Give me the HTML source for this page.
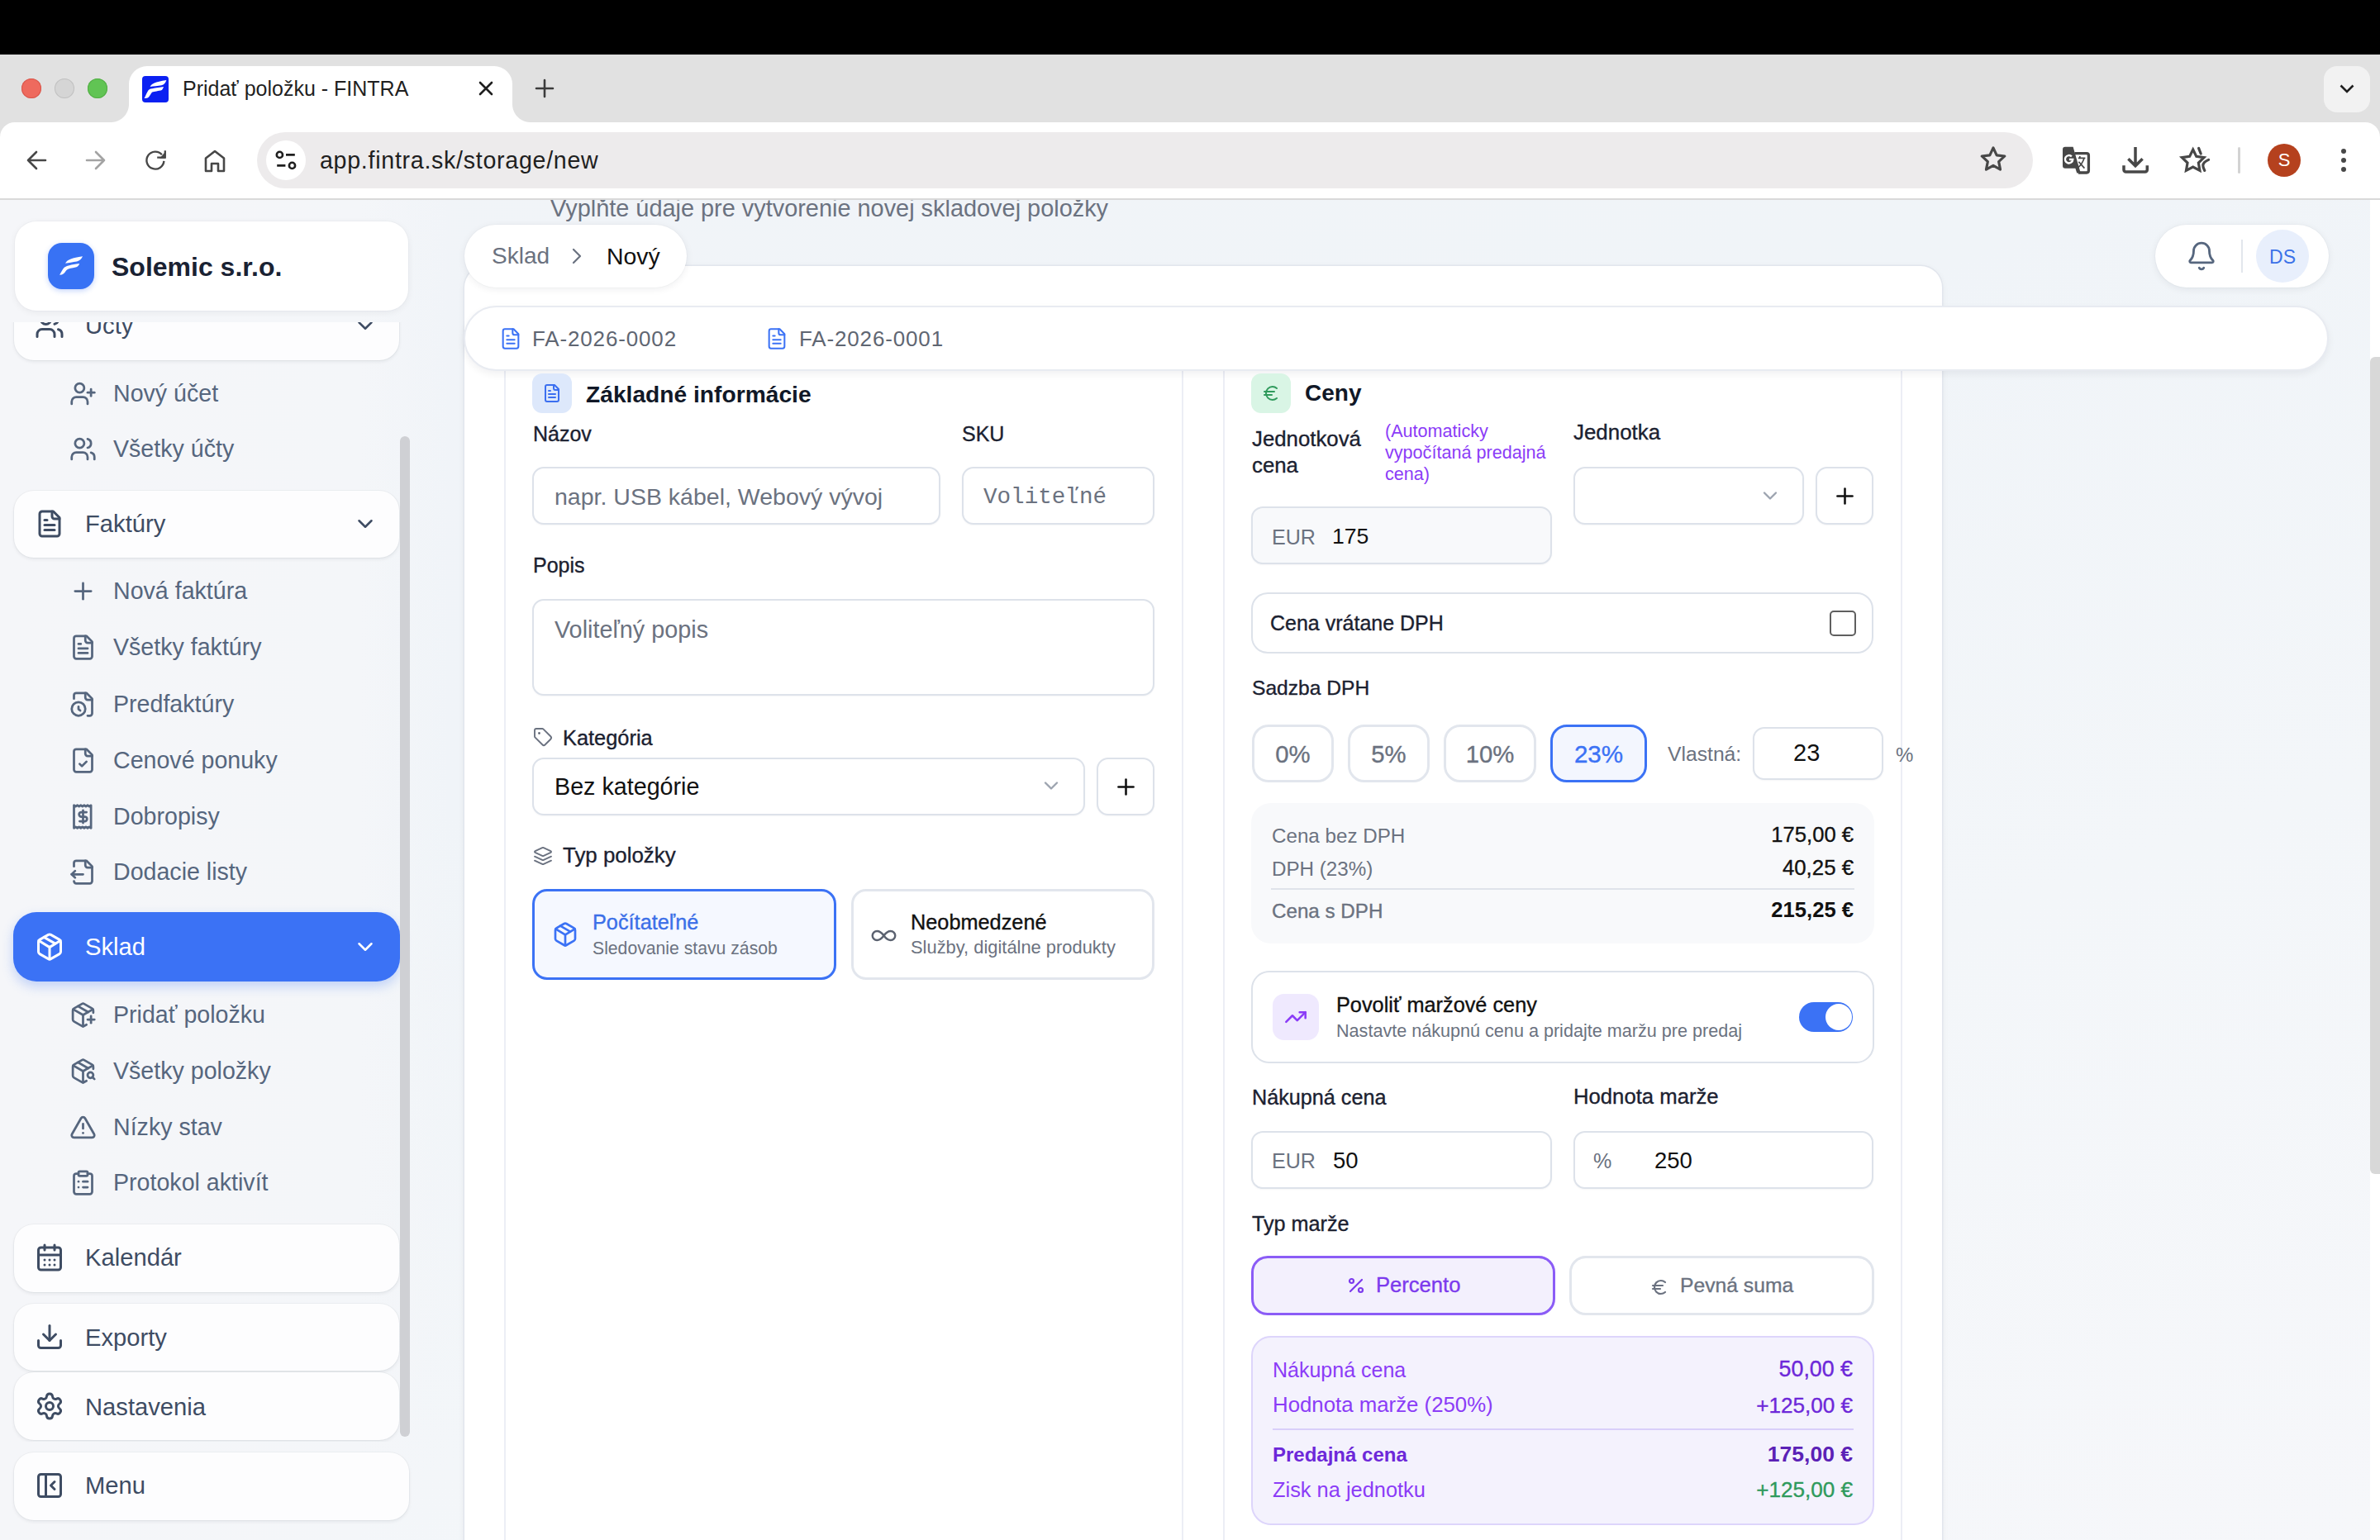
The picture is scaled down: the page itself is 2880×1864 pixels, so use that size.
<!DOCTYPE html>
<html><head><meta charset="utf-8"><style>*{margin:0;padding:0;box-sizing:border-box}
html,body{width:2880px;height:1864px;overflow:hidden;background:#f3f5f8;font-family:"Liberation Sans",sans-serif}
.b{position:absolute}
.t{position:absolute;white-space:nowrap;line-height:1}
svg.b{overflow:visible}
</style></head><body>
<div id="root" style="position:relative;width:2880px;height:1864px;overflow:hidden">
<div class="b" style="left:0;top:242px;width:2880px;height:1622px;background:linear-gradient(160deg,#f1f4f8 0%,#f0f4f8 35%,#f3f6f9 65%,#f6f7fa 100%);"></div>
<div class="b" style="left:0;top:242px;width:545px;height:1622px;background:linear-gradient(90deg,#f5f6f9 0%,#f4f6f9 80%,rgba(244,246,249,0) 100%);"></div>
<div class="b" style="left:0;top:390px;width:520px;height:1355px;overflow:hidden;"><div class="b" style="left:0;top:-390px;width:520px;height:1864px;">
<div class="b " style="left:17px;top:355px;width:466px;height:81px;background:#fdfdfe;border-radius:24px;box-shadow:0 2px 4px rgba(15,23,42,0.07),0 0 0 1px rgba(15,23,42,0.03);"></div>
<svg class="b" style="left:42px;top:375.5px;" width="36" height="36" viewBox="0 0 24 24" fill="none" stroke="#3e4c63" stroke-width="2" stroke-linecap="round" stroke-linejoin="round"><path d="M16 21v-2a4 4 0 0 0-4-4H6a4 4 0 0 0-4 4v2"/><path d="M16 3.13a4 4 0 0 1 0 7.75"/><path d="M22 21v-2a4 4 0 0 0-3-3.87"/><circle cx="9" cy="7" r="4"/></svg>
<div class="t " style="left:103px;top:380.28px;font-size:29.2px;color:#3e4c63;">Účty</div>
<svg class="b" style="left:427px;top:378.5px;" width="30" height="30" viewBox="0 0 24 24" fill="none" stroke="#3e4c63" stroke-width="2" stroke-linecap="round" stroke-linejoin="round"><path d="m6 9 6 6 6-6"/></svg>
<svg class="b" style="left:83.5px;top:459.5px;" width="33" height="33" viewBox="0 0 24 24" fill="none" stroke="#56667e" stroke-width="2" stroke-linecap="round" stroke-linejoin="round"><path d="M16 21v-2a4 4 0 0 0-4-4H6a4 4 0 0 0-4 4v2"/><circle cx="9" cy="7" r="4"/><line x1="19" x2="19" y1="8" y2="14"/><line x1="22" x2="16" y1="11" y2="11"/></svg>
<div class="t " style="left:137px;top:461.79px;font-size:28.6px;color:#56667e;">Nový účet</div>
<svg class="b" style="left:83.5px;top:526.5px;" width="33" height="33" viewBox="0 0 24 24" fill="none" stroke="#56667e" stroke-width="2" stroke-linecap="round" stroke-linejoin="round"><path d="M16 21v-2a4 4 0 0 0-4-4H6a4 4 0 0 0-4 4v2"/><path d="M16 3.13a4 4 0 0 1 0 7.75"/><path d="M22 21v-2a4 4 0 0 0-3-3.87"/><circle cx="9" cy="7" r="4"/></svg>
<div class="t " style="left:137px;top:528.79px;font-size:28.6px;color:#56667e;">Všetky účty</div>
<div class="b " style="left:17px;top:594px;width:466px;height:81px;background:#fdfdfe;border-radius:24px;box-shadow:0 2px 4px rgba(15,23,42,0.07),0 0 0 1px rgba(15,23,42,0.03);"></div>
<svg class="b" style="left:42px;top:615.5px;" width="36" height="36" viewBox="0 0 24 24" fill="none" stroke="#3e4c63" stroke-width="2" stroke-linecap="round" stroke-linejoin="round"><path d="M15 2H6a2 2 0 0 0-2 2v16a2 2 0 0 0 2 2h12a2 2 0 0 0 2-2V7Z"/><path d="M14 2v4a2 2 0 0 0 2 2h4"/><path d="M10 9H8"/><path d="M16 13H8"/><path d="M16 17H8"/></svg>
<div class="t " style="left:103px;top:620.28px;font-size:29.2px;color:#3e4c63;">Faktúry</div>
<svg class="b" style="left:427px;top:618.5px;" width="30" height="30" viewBox="0 0 24 24" fill="none" stroke="#3e4c63" stroke-width="2" stroke-linecap="round" stroke-linejoin="round"><path d="m6 9 6 6 6-6"/></svg>
<svg class="b" style="left:83.5px;top:698.5px;" width="33" height="33" viewBox="0 0 24 24" fill="none" stroke="#56667e" stroke-width="2" stroke-linecap="round" stroke-linejoin="round"><path d="M5 12h14"/><path d="M12 5v14"/></svg>
<div class="t " style="left:137px;top:700.79px;font-size:28.6px;color:#56667e;">Nová faktúra</div>
<svg class="b" style="left:83.5px;top:766.5px;" width="33" height="33" viewBox="0 0 24 24" fill="none" stroke="#56667e" stroke-width="2" stroke-linecap="round" stroke-linejoin="round"><path d="M15 2H6a2 2 0 0 0-2 2v16a2 2 0 0 0 2 2h12a2 2 0 0 0 2-2V7Z"/><path d="M14 2v4a2 2 0 0 0 2 2h4"/><path d="M10 9H8"/><path d="M16 13H8"/><path d="M16 17H8"/></svg>
<div class="t " style="left:137px;top:768.79px;font-size:28.6px;color:#56667e;">Všetky faktúry</div>
<svg class="b" style="left:83.5px;top:835.5px;" width="33" height="33" viewBox="0 0 24 24" fill="none" stroke="#56667e" stroke-width="2" stroke-linecap="round" stroke-linejoin="round"><path d="M16 22h2a2 2 0 0 0 2-2V7l-5-5H6a2 2 0 0 0-2 2v3"/><path d="M14 2v4a2 2 0 0 0 2 2h4"/><circle cx="8" cy="16" r="6"/><path d="M9.5 17.5 8 16.25V14"/></svg>
<div class="t " style="left:137px;top:837.79px;font-size:28.6px;color:#56667e;">Predfaktúry</div>
<svg class="b" style="left:83.5px;top:903.5px;" width="33" height="33" viewBox="0 0 24 24" fill="none" stroke="#56667e" stroke-width="2" stroke-linecap="round" stroke-linejoin="round"><path d="M15 2H6a2 2 0 0 0-2 2v16a2 2 0 0 0 2 2h12a2 2 0 0 0 2-2V7Z"/><path d="M14 2v4a2 2 0 0 0 2 2h4"/><path d="m9 15 2 2 4-4"/></svg>
<div class="t " style="left:137px;top:905.79px;font-size:28.6px;color:#56667e;">Cenové ponuky</div>
<svg class="b" style="left:83.5px;top:971.5px;" width="33" height="33" viewBox="0 0 24 24" fill="none" stroke="#56667e" stroke-width="2" stroke-linecap="round" stroke-linejoin="round"><path d="M4 3v19l1.5-1 1.5 1 1.5-1 1.5 1 1.5-1 1.5 1 1.5-1 1.5 1 1.5-1 1.5 1V2l-1.5 1-1.5-1-1.5 1-1.5-1-1.5 1-1.5-1-1.5 1-1.5-1-1.5 1-1.5-1Z"/><path d="M15 8h-4.5a2 2 0 1 0 0 4h3a2 2 0 1 1 0 4H9"/><path d="M12 17.5v-11"/></svg>
<div class="t " style="left:137px;top:973.79px;font-size:28.6px;color:#56667e;">Dobropisy</div>
<svg class="b" style="left:83.5px;top:1038.5px;" width="33" height="33" viewBox="0 0 24 24" fill="none" stroke="#56667e" stroke-width="2" stroke-linecap="round" stroke-linejoin="round"><path d="M14 2v4a2 2 0 0 0 2 2h4"/><path d="M4 7V4a2 2 0 0 1 2-2h9l5 5v13a2 2 0 0 1-2 2H6a2 2 0 0 1-2-2"/><path d="m5 11-3 3"/><path d="m5 17-3-3h10"/></svg>
<div class="t " style="left:137px;top:1040.79px;font-size:28.6px;color:#56667e;">Dodacie listy</div>
<div class="b " style="left:16px;top:1104px;width:468px;height:84px;background:#3b72f5;border-radius:28px;box-shadow:0 6px 14px rgba(59,114,245,0.28);"></div>
<svg class="b" style="left:42px;top:1127.5px;" width="36" height="36" viewBox="0 0 24 24" fill="none" stroke="#fff" stroke-width="2" stroke-linecap="round" stroke-linejoin="round"><path d="M11 21.73a2 2 0 0 0 2 0l7-4A2 2 0 0 0 21 16V8a2 2 0 0 0-1-1.73l-7-4a2 2 0 0 0-2 0l-7 4A2 2 0 0 0 3 8v8a2 2 0 0 0 1 1.73z"/><path d="M12 22V12"/><path d="m3.3 7 7.703 4.734a2 2 0 0 0 1.994 0L20.7 7"/><path d="m7.5 4.27 9 5.15"/></svg>
<div class="t " style="left:103px;top:1132.28px;font-size:29.2px;color:#fff;">Sklad</div>
<svg class="b" style="left:427px;top:1130.5px;" width="30" height="30" viewBox="0 0 24 24" fill="none" stroke="#fff" stroke-width="2" stroke-linecap="round" stroke-linejoin="round"><path d="m6 9 6 6 6-6"/></svg>
<svg class="b" style="left:83.5px;top:1211.5px;" width="33" height="33" viewBox="0 0 24 24" fill="none" stroke="#56667e" stroke-width="2" stroke-linecap="round" stroke-linejoin="round"><path d="M16 16h6"/><path d="M19 13v6"/><path d="M21 10V8a2 2 0 0 0-1-1.73l-7-4a2 2 0 0 0-2 0l-7 4A2 2 0 0 0 3 8v8a2 2 0 0 0 1 1.73l7 4a2 2 0 0 0 2 0l2-1.14"/><path d="m7.5 4.27 9 5.15"/><polyline points="3.29 7 12 12 20.71 7"/><line x1="12" x2="12" y1="22" y2="12"/></svg>
<div class="t " style="left:137px;top:1213.79px;font-size:28.6px;color:#56667e;">Pridať položku</div>
<svg class="b" style="left:83.5px;top:1279.5px;" width="33" height="33" viewBox="0 0 24 24" fill="none" stroke="#56667e" stroke-width="2" stroke-linecap="round" stroke-linejoin="round"><path d="M21 10V8a2 2 0 0 0-1-1.73l-7-4a2 2 0 0 0-2 0l-7 4A2 2 0 0 0 3 8v8a2 2 0 0 0 1 1.73l7 4a2 2 0 0 0 2 0l2-1.14"/><path d="m7.5 4.27 9 5.15"/><polyline points="3.29 7 12 12 20.71 7"/><line x1="12" x2="12" y1="22" y2="12"/><circle cx="18.5" cy="15.5" r="2.5"/><path d="M20.27 17.27 22 19"/></svg>
<div class="t " style="left:137px;top:1281.79px;font-size:28.6px;color:#56667e;">Všetky položky</div>
<svg class="b" style="left:83.5px;top:1347.5px;" width="33" height="33" viewBox="0 0 24 24" fill="none" stroke="#56667e" stroke-width="2" stroke-linecap="round" stroke-linejoin="round"><path d="m21.73 18-8-14a2 2 0 0 0-3.48 0l-8 14A2 2 0 0 0 4 21h16a2 2 0 0 0 1.73-3"/><path d="M12 9v4"/><path d="M12 17h.01"/></svg>
<div class="t " style="left:137px;top:1349.79px;font-size:28.6px;color:#56667e;">Nízky stav</div>
<svg class="b" style="left:83.5px;top:1414.5px;" width="33" height="33" viewBox="0 0 24 24" fill="none" stroke="#56667e" stroke-width="2" stroke-linecap="round" stroke-linejoin="round"><rect width="8" height="4" x="8" y="2" rx="1" ry="1"/><path d="M16 4h2a2 2 0 0 1 2 2v14a2 2 0 0 1-2 2H6a2 2 0 0 1-2-2V6a2 2 0 0 1 2-2h2"/><path d="M12 11h4"/><path d="M12 16h4"/><path d="M8 11h.01"/><path d="M8 16h.01"/></svg>
<div class="t " style="left:137px;top:1416.79px;font-size:28.6px;color:#56667e;">Protokol aktivít</div>
<div class="b " style="left:17px;top:1482px;width:466px;height:82px;background:#fdfdfe;border-radius:24px;box-shadow:0 2px 4px rgba(15,23,42,0.07),0 0 0 1px rgba(15,23,42,0.03);"></div>
<svg class="b" style="left:42px;top:1503.5px;" width="36" height="36" viewBox="0 0 24 24" fill="none" stroke="#3e4c63" stroke-width="2" stroke-linecap="round" stroke-linejoin="round"><path d="M8 2v4"/><path d="M16 2v4"/><rect width="18" height="18" x="3" y="4" rx="2"/><path d="M3 10h18"/><path d="M8 14h.01"/><path d="M12 14h.01"/><path d="M16 14h.01"/><path d="M8 18h.01"/><path d="M12 18h.01"/><path d="M16 18h.01"/></svg>
<div class="t " style="left:103px;top:1508.28px;font-size:29.2px;color:#3e4c63;">Kalendár</div>
<div class="b " style="left:17px;top:1578px;width:466px;height:81px;background:#fdfdfe;border-radius:24px;box-shadow:0 2px 4px rgba(15,23,42,0.07),0 0 0 1px rgba(15,23,42,0.03);"></div>
<svg class="b" style="left:42px;top:1600.0px;" width="36" height="36" viewBox="0 0 24 24" fill="none" stroke="#3e4c63" stroke-width="2" stroke-linecap="round" stroke-linejoin="round"><path d="M21 15v4a2 2 0 0 1-2 2H5a2 2 0 0 1-2-2v-4"/><polyline points="7 10 12 15 17 10"/><line x1="12" x2="12" y1="15" y2="3"/></svg>
<div class="t " style="left:103px;top:1604.78px;font-size:29.2px;color:#3e4c63;">Exporty</div>
<div class="b " style="left:17px;top:1661px;width:466px;height:82px;background:#fdfdfe;border-radius:24px;box-shadow:0 2px 4px rgba(15,23,42,0.07),0 0 0 1px rgba(15,23,42,0.03);"></div>
<svg class="b" style="left:42px;top:1684.0px;" width="36" height="36" viewBox="0 0 24 24" fill="none" stroke="#3e4c63" stroke-width="2" stroke-linecap="round" stroke-linejoin="round"><path d="M9.671 4.136a2.34 2.34 0 0 1 4.659 0 2.34 2.34 0 0 0 3.319 1.915 2.34 2.34 0 0 1 2.33 4.033 2.34 2.34 0 0 0 0 3.831 2.34 2.34 0 0 1-2.33 4.033 2.34 2.34 0 0 0-3.319 1.915 2.34 2.34 0 0 1-4.659 0 2.34 2.34 0 0 0-3.32-1.915 2.34 2.34 0 0 1-2.33-4.033 2.34 2.34 0 0 0 0-3.831A2.34 2.34 0 0 1 6.35 6.051a2.34 2.34 0 0 0 3.319-1.915"/><circle cx="12" cy="12" r="3"/></svg>
<div class="t " style="left:103px;top:1688.78px;font-size:29.2px;color:#3e4c63;">Nastavenia</div>
</div></div>
<div class="b " style="left:484px;top:528px;width:12px;height:1211px;background:#cfd0d4;border-radius:6px;"></div>
<div class="b " style="left:17px;top:1758px;width:478px;height:82px;background:#fdfdfe;border-radius:24px;box-shadow:0 2px 4px rgba(15,23,42,0.07),0 0 0 1px rgba(15,23,42,0.03);"></div>
<svg class="b" style="left:42px;top:1779.5px;" width="36" height="36" viewBox="0 0 24 24" fill="none" stroke="#3e4c63" stroke-width="2" stroke-linecap="round" stroke-linejoin="round"><rect width="18" height="18" x="3" y="3" rx="2"/><path d="M9 3v18"/><path d="m16 15-3-3 3-3"/></svg>
<div class="t " style="left:103px;top:1784.28px;font-size:29.2px;color:#3e4c63;">Menu</div>
<div class="b " style="left:18px;top:268px;width:476px;height:108px;background:#fff;border-radius:26px;box-shadow:0 2px 8px rgba(15,23,42,0.06),0 0 0 1px rgba(15,23,42,0.02);"></div>
<div class="b " style="left:58px;top:294px;width:56px;height:56px;background:#3872f4;border-radius:17px;box-shadow:0 2px 6px rgba(59,113,243,0.3);"></div>
<svg class="b" style="left:58px;top:294px" width="56" height="56" viewBox="0 0 56 56"><path d="M21 24.7 C24 20 29 18.2 42 16.3 C40.5 19.5 38.5 21.6 35 22.4 C30 23.3 25 23.8 21 24.7 Z" fill="#fff"/><path d="M14.1 38.8 C16.5 35 17.5 32 19.5 30 C22 27.5 28 26.3 38.2 24.9 C37.2 27.3 36 28.8 33.5 29.5 C29 30.5 25 31 23 32.5 C21 34 20.5 37.5 16.5 38.5 Z" fill="#fff"/></svg>
<div class="t " style="left:135px;top:306.91px;font-size:32px;color:#1a2233;font-weight:700;">Solemic s.r.o.</div>
<div class="t " style="left:666px;top:237.54px;font-size:28.9px;color:#6b7280;">Vyplňte údaje pre vytvorenie novej skladovej položky</div>
<div class="b " style="left:562px;top:322px;width:1788px;height:1578px;background:#fff;border-radius:26px;box-shadow:0 0 0 1.5px #e2e6ed,0 2px 10px rgba(15,23,42,0.06);"></div>
<div class="b " style="left:610px;top:400px;width:822px;height:1500px;border:2px solid #eceef5;border-radius:24px;box-sizing:border-box;"></div>
<div class="b " style="left:1480px;top:400px;width:822px;height:1500px;border:2px solid #eceef5;border-radius:24px;box-sizing:border-box;"></div>
<div class="b " style="left:562px;top:272px;width:269px;height:76px;background:#fff;border-radius:38px;box-shadow:0 2px 10px rgba(15,23,42,0.07),0 0 0 1px rgba(15,23,42,0.02);"></div>
<div class="t " style="left:595px;top:296.30px;font-size:28px;color:#6b7280;">Sklad</div>
<svg class="b" style="left:682px;top:294px;" width="32" height="32" viewBox="0 0 24 24" fill="none" stroke="#6b7280" stroke-width="1.7" stroke-linecap="round" stroke-linejoin="round"><path d="m9 18 6-6-6-6"/></svg>
<div class="t " style="left:734px;top:295.96px;font-size:28.4px;color:#111;">Nový</div>
<div class="b " style="left:2608px;top:272px;width:210px;height:76px;background:#fff;border-radius:38px;box-shadow:0 2px 10px rgba(15,23,42,0.07),0 0 0 1px rgba(15,23,42,0.02);"></div>
<svg class="b" style="left:2645px;top:291px;" width="38" height="38" viewBox="0 0 24 24" fill="none" stroke="#56667e" stroke-width="1.8" stroke-linecap="round" stroke-linejoin="round"><path d="M10.268 21a2 2 0 0 0 3.464 0"/><path d="M3.262 15.326A1 1 0 0 0 4 17h16a1 1 0 0 0 .74-1.673C19.41 13.956 18 12.499 18 8A6 6 0 0 0 6 8c0 4.499-1.411 5.956-2.738 7.326"/></svg>
<div class="b " style="left:2712px;top:290px;width:2px;height:40px;background:#e2e6ec;"></div>
<div class="b " style="left:2730px;top:278px;width:64px;height:64px;background:#e8effc;border-radius:50%;"></div>
<div class="t " style="left:2730.0px;width:64px;text-align:center;top:299.53px;font-size:23px;color:#3b72e8;">DS</div>
<div class="b " style="left:561px;top:370px;width:2257px;height:79px;background:#fff;border:2px solid #e8ebf1;border-radius:40px;box-shadow:0 4px 10px rgba(15,23,42,0.06);"></div>
<svg class="b" style="left:604px;top:396px;" width="28" height="28" viewBox="0 0 24 24" fill="none" stroke="#3b72f5" stroke-width="1.75" stroke-linecap="round" stroke-linejoin="round"><path d="M15 2H6a2 2 0 0 0-2 2v16a2 2 0 0 0 2 2h12a2 2 0 0 0 2-2V7Z"/><path d="M14 2v4a2 2 0 0 0 2 2h4"/><path d="M10 9H8"/><path d="M16 13H8"/><path d="M16 17H8"/></svg>
<div class="t " style="left:644px;top:396.99px;font-size:26px;color:#5f6672;letter-spacing:0.85px;">FA-2026-0002</div>
<svg class="b" style="left:926px;top:396px;" width="28" height="28" viewBox="0 0 24 24" fill="none" stroke="#3b72f5" stroke-width="1.75" stroke-linecap="round" stroke-linejoin="round"><path d="M15 2H6a2 2 0 0 0-2 2v16a2 2 0 0 0 2 2h12a2 2 0 0 0 2-2V7Z"/><path d="M14 2v4a2 2 0 0 0 2 2h4"/><path d="M10 9H8"/><path d="M16 13H8"/><path d="M16 17H8"/></svg>
<div class="t " style="left:967px;top:396.99px;font-size:26px;color:#5f6672;letter-spacing:0.85px;">FA-2026-0001</div>
<div class="b " style="left:2868px;top:242px;width:12px;height:1622px;background:#fff;"></div>
<div class="b " style="left:2868px;top:432px;width:12px;height:989px;background:#d8d8d8;border-radius:6px 0 0 6px;"></div>
<div class="b " style="left:644px;top:452px;width:48px;height:48px;background:#dde8fb;border-radius:12px;"></div>
<svg class="b" style="left:656px;top:464px;" width="24" height="24" viewBox="0 0 24 24" fill="none" stroke="#3b6ff0" stroke-width="2" stroke-linecap="round" stroke-linejoin="round"><path d="M15 2H6a2 2 0 0 0-2 2v16a2 2 0 0 0 2 2h12a2 2 0 0 0 2-2V7Z"/><path d="M14 2v4a2 2 0 0 0 2 2h4"/><path d="M10 9H8"/><path d="M16 13H8"/><path d="M16 17H8"/></svg>
<div class="t " style="left:709px;top:463.13px;font-size:28.2px;color:#111827;font-weight:700;">Základné informácie</div>
<div class="t " style="left:645px;top:512.84px;font-size:25px;color:#1b2130;-webkit-text-stroke:0.35px currentColor;">Názov</div>
<div class="t " style="left:1164px;top:512.84px;font-size:25px;color:#1b2130;-webkit-text-stroke:0.35px currentColor;">SKU</div>
<div class="b " style="left:644px;top:565px;width:494px;height:70px;background:#fff;border:2px solid #dde2ea;border-radius:14px;box-sizing:border-box;box-shadow:0 1px 2px rgba(15,23,42,0.04);"></div>
<div class="t " style="left:671px;top:586.87px;font-size:28.5px;color:#6b7280;">napr. USB kábel, Webový vývoj</div>
<div class="b " style="left:1164px;top:565px;width:233px;height:70px;background:#fff;border:2px solid #dde2ea;border-radius:14px;box-sizing:border-box;box-shadow:0 1px 2px rgba(15,23,42,0.04);"></div>
<div class="t " style="left:1190px;top:587.64px;font-size:27.6px;color:#6b7280;font-family:'Liberation Mono',monospace;">Voliteľné</div>
<div class="t " style="left:645px;top:671.84px;font-size:25px;color:#1b2130;-webkit-text-stroke:0.35px currentColor;">Popis</div>
<div class="b " style="left:644px;top:725px;width:753px;height:117px;background:#fff;border:2px solid #dde2ea;border-radius:14px;box-sizing:border-box;box-shadow:0 1px 2px rgba(15,23,42,0.04);"></div>
<div class="t " style="left:671px;top:747.62px;font-size:28.8px;color:#6b7280;">Voliteľný popis</div>
<svg class="b" style="left:644.5px;top:880px;" width="24" height="24" viewBox="0 0 24 24" fill="none" stroke="#6b7280" stroke-width="1.9" stroke-linecap="round" stroke-linejoin="round"><path d="M12.586 2.586A2 2 0 0 0 11.172 2H4a2 2 0 0 0-2 2v7.172a2 2 0 0 0 .586 1.414l8.704 8.704a2.426 2.426 0 0 0 3.42 0l6.58-6.58a2.426 2.426 0 0 0 0-3.42z"/><circle cx="7.5" cy="7.5" r=".5" fill="currentColor"/></svg>
<div class="t " style="left:681px;top:880.50px;font-size:25.4px;color:#1b2130;-webkit-text-stroke:0.35px currentColor;">Kategória</div>
<div class="b " style="left:644px;top:917px;width:669px;height:70px;background:#fff;border:2px solid #dde2ea;border-radius:14px;box-sizing:border-box;box-shadow:0 1px 2px rgba(15,23,42,0.04);"></div>
<div class="t " style="left:671px;top:937.71px;font-size:28.7px;color:#111;">Bez kategórie</div>
<svg class="b" style="left:1258px;top:937px;" width="28" height="28" viewBox="0 0 24 24" fill="none" stroke="#9ca3af" stroke-width="2" stroke-linecap="round" stroke-linejoin="round"><path d="m6 9 6 6 6-6"/></svg>
<div class="b " style="left:1327px;top:917px;width:70px;height:70px;background:#fff;border:2px solid #dde2ea;border-radius:14px;box-sizing:border-box;box-shadow:0 1px 2px rgba(15,23,42,0.04);"></div>
<svg class="b" style="left:1346.5px;top:936.5px;" width="31" height="31" viewBox="0 0 24 24" fill="none" stroke="#111" stroke-width="2" stroke-linecap="round" stroke-linejoin="round"><path d="M5 12h14"/><path d="M12 5v14"/></svg>
<svg class="b" style="left:644.5px;top:1024px;" width="24" height="24" viewBox="0 0 24 24" fill="none" stroke="#6b7280" stroke-width="1.9" stroke-linecap="round" stroke-linejoin="round"><path d="M12.83 2.18a2 2 0 0 0-1.66 0L2.6 6.08a1 1 0 0 0 0 1.83l8.58 3.91a2 2 0 0 0 1.66 0l8.58-3.9a1 1 0 0 0 0-1.83Z"/><path d="m22 17.65-9.17 4.16a2 2 0 0 1-1.66 0L2 17.65"/><path d="m22 12.65-9.17 4.16a2 2 0 0 1-1.66 0L2 12.65"/></svg>
<div class="t " style="left:681px;top:1023.08px;font-size:25.9px;color:#1b2130;-webkit-text-stroke:0.35px currentColor;">Typ položky</div>
<div class="b " style="left:644px;top:1076px;width:368px;height:110px;background:#f5f8ff;border:3px solid #3b72f5;border-radius:18px;box-sizing:border-box;"></div>
<svg class="b" style="left:668px;top:1115px;" width="32" height="32" viewBox="0 0 24 24" fill="none" stroke="#3b72f5" stroke-width="2" stroke-linecap="round" stroke-linejoin="round"><path d="M11 21.73a2 2 0 0 0 2 0l7-4A2 2 0 0 0 21 16V8a2 2 0 0 0-1-1.73l-7-4a2 2 0 0 0-2 0l-7 4A2 2 0 0 0 3 8v8a2 2 0 0 0 1 1.73z"/><path d="M12 22V12"/><path d="m3.3 7 7.703 4.734a2 2 0 0 0 1.994 0L20.7 7"/><path d="m7.5 4.27 9 5.15"/></svg>
<div class="t " style="left:717px;top:1103.58px;font-size:25.3px;color:#3b6fe8;-webkit-text-stroke:0.35px currentColor;">Počítateľné</div>
<div class="t " style="left:717px;top:1137.05px;font-size:21.2px;color:#6b7280;">Sledovanie stavu zásob</div>
<div class="b " style="left:1030px;top:1076px;width:367px;height:110px;background:#fff;border:3px solid #e2e6ed;border-radius:18px;box-sizing:border-box;"></div>
<svg class="b" style="left:1052.5px;top:1115.5px;" width="33" height="33" viewBox="0 0 24 24" fill="none" stroke="#5b6270" stroke-width="1.8" stroke-linecap="round" stroke-linejoin="round"><path d="M12 12c-2-2.67-4-4-6-4a4 4 0 1 0 0 8c2 0 4-1.33 6-4Zm0 0c2 2.67 4 4 6 4a4 4 0 0 0 0-8c-2 0-4 1.33-6 4Z"/></svg>
<div class="t " style="left:1102px;top:1103.58px;font-size:25.3px;color:#111;-webkit-text-stroke:0.35px currentColor;">Neobmedzené</div>
<div class="t " style="left:1102px;top:1136.46px;font-size:21.9px;color:#6b7280;">Služby, digitálne produkty</div>
<div class="b " style="left:1514px;top:452px;width:48px;height:48px;background:#d9f5e5;border-radius:12px;"></div>
<svg class="b" style="left:1526px;top:464px;" width="24" height="24" viewBox="0 0 24 24" fill="none" stroke="#2f9a5c" stroke-width="2" stroke-linecap="round" stroke-linejoin="round"><path d="M4 10h12"/><path d="M4 14h9"/><path d="M19 6a7.7 7.7 0 0 0-5.2-2A7.9 7.9 0 0 0 6 12c0 4.4 3.5 8 7.8 8 2 0 3.8-.8 5.2-2"/></svg>
<div class="t " style="left:1579px;top:462.30px;font-size:28px;color:#111827;font-weight:700;">Ceny</div>
<div class="t " style="left:1515px;top:519.16px;font-size:25.8px;color:#1b2130;-webkit-text-stroke:0.35px currentColor;">Jednotková</div>
<div class="t " style="left:1515px;top:551.16px;font-size:25.8px;color:#1b2130;-webkit-text-stroke:0.35px currentColor;">cena</div>
<div class="t " style="left:1676px;top:510.72px;font-size:21.6px;color:#8b3cf7;">(Automaticky</div>
<div class="t " style="left:1676px;top:536.72px;font-size:21.6px;color:#8b3cf7;">vypočítaná predajná</div>
<div class="t " style="left:1676px;top:562.72px;font-size:21.6px;color:#8b3cf7;">cena)</div>
<div class="t " style="left:1904px;top:511.08px;font-size:25.9px;color:#1b2130;-webkit-text-stroke:0.35px currentColor;">Jednotka</div>
<div class="b " style="left:1514px;top:613px;width:364px;height:70px;background:#f8f9fb;border:2px solid #dde2ea;border-radius:14px;box-sizing:border-box;box-shadow:0 1px 2px rgba(15,23,42,0.04);"></div>
<div class="t " style="left:1539px;top:637.75px;font-size:25.1px;color:#6b7280;">EUR</div>
<div class="t " style="left:1612px;top:636.48px;font-size:26.6px;color:#111;">175</div>
<div class="b " style="left:1904px;top:565px;width:279px;height:70px;background:#fff;border:2px solid #dde2ea;border-radius:14px;box-sizing:border-box;box-shadow:0 1px 2px rgba(15,23,42,0.04);"></div>
<svg class="b" style="left:2128px;top:586px;" width="28" height="28" viewBox="0 0 24 24" fill="none" stroke="#9ca3af" stroke-width="2" stroke-linecap="round" stroke-linejoin="round"><path d="m6 9 6 6 6-6"/></svg>
<div class="b " style="left:2197px;top:565px;width:70px;height:70px;background:#fff;border:2px solid #dde2ea;border-radius:14px;box-sizing:border-box;box-shadow:0 1px 2px rgba(15,23,42,0.04);"></div>
<svg class="b" style="left:2216.5px;top:584.5px;" width="31" height="31" viewBox="0 0 24 24" fill="none" stroke="#111" stroke-width="2" stroke-linecap="round" stroke-linejoin="round"><path d="M5 12h14"/><path d="M12 5v14"/></svg>
<div class="b " style="left:1514px;top:717px;width:753px;height:74px;background:#fff;border:2px solid #dde2ea;border-radius:20px;box-sizing:border-box;"></div>
<div class="t " style="left:1537px;top:741.84px;font-size:25px;color:#1b2130;-webkit-text-stroke:0.35px currentColor;">Cena vrátane DPH</div>
<div class="b " style="left:2214px;top:739px;width:32px;height:31px;border:2px solid #5f5f5f;border-radius:5px;box-sizing:border-box;background:#fff;"></div>
<div class="t " style="left:1515px;top:821.18px;font-size:24.6px;color:#1b2130;-webkit-text-stroke:0.35px currentColor;">Sadzba DPH</div>
<div class="b " style="left:1515px;top:877px;width:99px;height:70px;background:#fff;border:3px solid #e2e6ed;border-radius:20px;box-sizing:border-box;"></div>
<div class="t " style="left:1515.0px;width:99px;text-align:center;top:898.20px;font-size:29.3px;color:#6b7280;-webkit-text-stroke:0.35px currentColor;">0%</div>
<div class="b " style="left:1631px;top:877px;width:99px;height:70px;background:#fff;border:3px solid #e2e6ed;border-radius:20px;box-sizing:border-box;"></div>
<div class="t " style="left:1631.0px;width:99px;text-align:center;top:898.20px;font-size:29.3px;color:#6b7280;-webkit-text-stroke:0.35px currentColor;">5%</div>
<div class="b " style="left:1747px;top:877px;width:112px;height:70px;background:#fff;border:3px solid #e2e6ed;border-radius:20px;box-sizing:border-box;"></div>
<div class="t " style="left:1747.0px;width:112px;text-align:center;top:898.20px;font-size:29.3px;color:#6b7280;-webkit-text-stroke:0.35px currentColor;">10%</div>
<div class="b " style="left:1876px;top:877px;width:117px;height:70px;background:#f3f6fe;border:3px solid #3b72f5;border-radius:20px;box-sizing:border-box;"></div>
<div class="t " style="left:1876.0px;width:117px;text-align:center;top:897.94px;font-size:29.6px;color:#3b72f5;-webkit-text-stroke:0.35px currentColor;">23%</div>
<div class="t " style="left:2018px;top:901.09px;font-size:24.7px;color:#6b7280;">Vlastná:</div>
<div class="b " style="left:2121px;top:880px;width:158px;height:64px;background:#fff;border:2px solid #dde2ea;border-radius:14px;box-sizing:border-box;box-shadow:0 1px 2px rgba(15,23,42,0.04);"></div>
<div class="t " style="left:2170px;top:897.45px;font-size:29px;color:#111;">23</div>
<div class="t " style="left:2294px;top:901.68px;font-size:24px;color:#6b7280;">%</div>
<div class="b " style="left:1514px;top:972px;width:754px;height:170px;background:#f8f9fb;border-radius:24px;"></div>
<div class="t " style="left:1539px;top:999.51px;font-size:24.2px;color:#6b7280;">Cena bez DPH</div>
<div class="t " style="right:637px;top:998.33px;font-size:25.6px;color:#111;-webkit-text-stroke:0.35px currentColor;">175,00 €</div>
<div class="t " style="left:1539px;top:1039.51px;font-size:24.2px;color:#6b7280;">DPH (23%)</div>
<div class="t " style="right:637px;top:1038.16px;font-size:25.8px;color:#111;-webkit-text-stroke:0.35px currentColor;">40,25 €</div>
<div class="b " style="left:1538px;top:1075px;width:706px;height:2px;background:#dfe3ea;"></div>
<div class="t " style="left:1539px;top:1090.51px;font-size:24.2px;color:#6b7280;-webkit-text-stroke:0.35px currentColor;">Cena s DPH</div>
<div class="t " style="right:637px;top:1089.33px;font-size:25.6px;color:#111;font-weight:700;">215,25 €</div>
<div class="b " style="left:1514px;top:1175px;width:754px;height:112px;background:#fff;border:2px solid #dde2ea;border-radius:22px;box-sizing:border-box;"></div>
<div class="b " style="left:1540px;top:1203px;width:56px;height:56px;background:#efe9fe;border-radius:14px;"></div>
<svg class="b" style="left:1554px;top:1217px;" width="28" height="28" viewBox="0 0 24 24" fill="none" stroke="#8b3cf7" stroke-width="2.2" stroke-linecap="round" stroke-linejoin="round"><polyline points="22 7 13.5 15.5 8.5 10.5 2 17"/><polyline points="16 7 22 7 22 13"/></svg>
<div class="t " style="left:1617px;top:1203.58px;font-size:25.3px;color:#111;-webkit-text-stroke:0.35px currentColor;">Povoliť maržové ceny</div>
<div class="t " style="left:1617px;top:1236.72px;font-size:21.6px;color:#6b7280;">Nastavte nákupnú cenu a pridajte maržu pre predaj</div>
<div class="b " style="left:2177px;top:1213px;width:65px;height:36px;background:#3b72f5;border-radius:18px;"></div>
<div class="b " style="left:2209px;top:1215px;width:32px;height:32px;background:#fff;border-radius:50%;"></div>
<div class="t " style="left:1515px;top:1315.67px;font-size:25.2px;color:#1b2130;-webkit-text-stroke:0.35px currentColor;">Nákupná cena</div>
<div class="t " style="left:1904px;top:1315.24px;font-size:25.7px;color:#1b2130;-webkit-text-stroke:0.35px currentColor;">Hodnota marže</div>
<div class="b " style="left:1514px;top:1369px;width:364px;height:70px;background:#fff;border:2px solid #dde2ea;border-radius:14px;box-sizing:border-box;box-shadow:0 1px 2px rgba(15,23,42,0.04);"></div>
<div class="t " style="left:1539px;top:1392.75px;font-size:25.1px;color:#6b7280;">EUR</div>
<div class="t " style="left:1613px;top:1390.72px;font-size:27.5px;color:#111;">50</div>
<div class="b " style="left:1904px;top:1369px;width:363px;height:70px;background:#fff;border:2px solid #dde2ea;border-radius:14px;box-sizing:border-box;box-shadow:0 1px 2px rgba(15,23,42,0.04);"></div>
<div class="t " style="left:1928px;top:1392.75px;font-size:25.1px;color:#6b7280;">%</div>
<div class="t " style="left:2002px;top:1390.72px;font-size:27.5px;color:#111;">250</div>
<div class="t " style="left:1515px;top:1468.67px;font-size:25.2px;color:#1b2130;-webkit-text-stroke:0.35px currentColor;">Typ marže</div>
<div class="b " style="left:1514px;top:1520px;width:368px;height:72px;background:#f3f0fd;border:3px solid #8b5cf6;border-radius:20px;box-sizing:border-box;"></div>
<svg class="b" style="left:1629px;top:1544px;" width="24" height="24" viewBox="0 0 24 24" fill="none" stroke="#7c3aed" stroke-width="2.2" stroke-linecap="round" stroke-linejoin="round"><line x1="19" x2="5" y1="5" y2="19"/><circle cx="6.5" cy="6.5" r="2.5"/><circle cx="17.5" cy="17.5" r="2.5"/></svg>
<div class="t " style="left:1665px;top:1543.33px;font-size:25.6px;color:#7c3aed;-webkit-text-stroke:0.35px currentColor;">Percento</div>
<div class="b " style="left:1899px;top:1520px;width:369px;height:72px;background:#fff;border:3px solid #e2e6ed;border-radius:20px;box-sizing:border-box;"></div>
<svg class="b" style="left:1996px;top:1545.5px;" width="24" height="24" viewBox="0 0 24 24" fill="none" stroke="#6b7280" stroke-width="2.2" stroke-linecap="round" stroke-linejoin="round"><path d="M4 10h12"/><path d="M4 14h9"/><path d="M19 6a7.7 7.7 0 0 0-5.2-2A7.9 7.9 0 0 0 6 12c0 4.4 3.5 8 7.8 8 2 0 3.8-.8 5.2-2"/></svg>
<div class="t " style="left:2033px;top:1544.09px;font-size:24.7px;color:#6b7280;-webkit-text-stroke:0.35px currentColor;">Pevná suma</div>
<div class="b " style="left:1514px;top:1617px;width:754px;height:229px;background:#f4f2fd;border:2px solid #ddd5fb;border-radius:24px;box-sizing:border-box;"></div>
<div class="t " style="left:1540px;top:1645.84px;font-size:25px;color:#8b3cf7;">Nákupná cena</div>
<div class="t " style="right:638px;top:1644.31px;font-size:26.8px;color:#6d28d9;-webkit-text-stroke:0.35px currentColor;">50,00 €</div>
<div class="t " style="left:1540px;top:1688.16px;font-size:25.8px;color:#8b3cf7;">Hodnota marže (250%)</div>
<div class="t " style="right:638px;top:1687.91px;font-size:26.1px;color:#6d28d9;-webkit-text-stroke:0.35px currentColor;">+125,00 €</div>
<div class="b " style="left:1540px;top:1729px;width:703px;height:2px;background:#d9cffa;"></div>
<div class="t " style="left:1540px;top:1748.68px;font-size:24px;color:#6d28d9;font-weight:700;">Predajná cena</div>
<div class="t " style="right:638px;top:1746.57px;font-size:26.5px;color:#5b21b6;font-weight:700;">175,00 €</div>
<div class="t " style="left:1540px;top:1790.50px;font-size:25.4px;color:#8b3cf7;">Zisk na jednotku</div>
<div class="t " style="right:638px;top:1789.91px;font-size:26.1px;color:#2f9a5c;-webkit-text-stroke:0.35px currentColor;">+125,00 €</div>
<div class="b " style="left:0px;top:0px;width:2880px;height:66px;background:#000;"></div>
<div class="b " style="left:0px;top:66px;width:2880px;height:124px;background:#e1e1e1;"></div>
<div class="b " style="left:26px;top:95px;width:24px;height:24px;background:#ee6a5e;border-radius:50%;box-shadow:inset 0 0 0 1px #d8574c;"></div>
<div class="b " style="left:66px;top:95px;width:24px;height:24px;background:#d5d5d5;border-radius:50%;box-shadow:inset 0 0 0 1px #c1c1c1;"></div>
<div class="b " style="left:106px;top:95px;width:24px;height:24px;background:#61c454;border-radius:50%;box-shadow:inset 0 0 0 1px #52ad45;"></div>
<div class="b " style="left:156px;top:80px;width:464px;height:70px;background:#fff;border-radius:22px 22px 0 0;"></div>
<div class="b " style="left:134px;top:126px;width:22px;height:22px;background:radial-gradient(circle at 0 0, transparent 21.5px, #fff 22.5px);"></div>
<div class="b " style="left:620px;top:126px;width:22px;height:22px;background:radial-gradient(circle at 100% 0, transparent 21.5px, #fff 22.5px);"></div>
<svg class="b" style="left:172px;top:92px" width="32" height="32" viewBox="0 0 32 32"><rect width="32" height="32" rx="4" fill="#0b20f2"/><path d="M9.6 12.9 C11.5 9.5 15 7 29.4 4.9 C28 8.5 26.5 10.5 23.5 11.2 C19 12 14 12.3 9.6 12.9 Z" fill="#fff"/><path d="M2.6 26.9 C4.5 23.5 6 19.5 7.5 17.3 C9 15.5 12 14.8 26 13 C25 15.5 24.5 17 22.5 17.6 C18 18.5 13 19 11.7 20.1 C10.5 21.5 9.5 24 8 25.5 C6.5 26.8 4.5 27 2.6 26.9 Z" fill="#fff"/></svg>
<div class="t " style="left:221px;top:94.84px;font-size:25px;color:#1f1f1f;">Pridať položku - FINTRA</div>
<svg class="b" style="left:579px;top:98px;" width="18" height="18" viewBox="0 0 18 18" fill="none" stroke="#1f1f1f" stroke-width="2.6" stroke-linecap="round" stroke-linejoin="round"><path d="M2 2L16 16M16 2L2 16"/></svg>
<svg class="b" style="left:648px;top:96px;" width="22" height="22" viewBox="0 0 22 22" fill="none" stroke="#3c3c3c" stroke-width="2.6" stroke-linecap="round" stroke-linejoin="round"><path d="M11 1v20M1 11h20"/></svg>
<div class="b " style="left:2812px;top:80px;width:56px;height:56px;background:#f2f2f2;border-radius:16px;"></div>
<svg class="b" style="left:2831px;top:101.5px;stroke-linecap:butt;stroke-linejoin:miter;" width="18" height="12" viewBox="0 0 18 12" fill="none" stroke="#1f1f1f" stroke-width="2.6" stroke-linecap="round" stroke-linejoin="round"><path d="M1.5 1.5l7.5 7.5 7.5-7.5"/></svg>
<div class="b " style="left:0px;top:148px;width:2880px;height:92px;background:#fff;border-radius:18px 18px 0 0;"></div>
<div class="b " style="left:0px;top:240px;width:2880px;height:2px;background:#d9d9d9;"></div>
<svg class="b" style="left:31px;top:181px;" width="26" height="26" viewBox="0 0 26 26" fill="none" stroke="#474747" stroke-width="2.6" stroke-linecap="round" stroke-linejoin="round"><path d="M24 13H3M13 3 3 13l10 10"/></svg>
<svg class="b" style="left:103px;top:181px;" width="26" height="26" viewBox="0 0 26 26" fill="none" stroke="#a3a3a3" stroke-width="2.6" stroke-linecap="round" stroke-linejoin="round"><path d="M2 13h21M13 3l10 10-10 10"/></svg>
<svg class="b" style="left:174px;top:181px" width="27" height="27" viewBox="0 0 27 27"><path d="M21.9 6.25A10.5 10.5 0 1 0 24.4 13.9" fill="none" stroke="#474747" stroke-width="2.4"/><path d="M16.2 9.6H25.8V1.2" fill="none" stroke="#474747" stroke-width="2.3" stroke-linejoin="miter"/><path d="M19 10.7L25.8 3V10.7Z" fill="#474747"/></svg>
<svg class="b" style="left:246px;top:180px;" width="28" height="29" viewBox="0 0 28 29" fill="none" stroke="#474747" stroke-width="2.6" stroke-linecap="round" stroke-linejoin="round"><path d="M3 27V11.5L14 3l11 8.5V27h-7v-9h-8v9Z"/></svg>
<div class="b " style="left:311px;top:160px;width:2149px;height:68px;background:#edebec;border-radius:34px;"></div>
<div class="b " style="left:322px;top:170px;width:48px;height:48px;background:#fff;border-radius:50%;"></div>
<svg class="b" style="left:320px;top:170px" width="50" height="50" viewBox="320 170 50 50"><g fill="none" stroke="#1f1f1f" stroke-width="2.6"><circle cx="338.4" cy="187.4" r="3.6"/><path d="M346 187.4H356.8M335.2 200.4H345.4"/><circle cx="353.5" cy="200.4" r="3.6"/></g></svg>
<div class="t " style="left:387px;top:179.79px;font-size:28.6px;color:#1f1f1f;letter-spacing:0.72px;">app.fintra.sk/storage/new</div>
<svg class="b" style="left:2394px;top:175px;" width="36" height="36" viewBox="0 0 32 32" fill="none" stroke="#474747" stroke-width="2.8" stroke-linecap="round" stroke-linejoin="round"><path d="M16 3.5l3.7 7.9 8.6 1-6.4 5.9 1.7 8.5L16 22.6l-7.6 4.2 1.7-8.5-6.4-5.9 8.6-1Z"/></svg>
<svg class="b" style="left:2480px;top:165px" width="210" height="60" viewBox="0 0 210 60"><path d="M19 12.8H28.6L37.8 44.6H33.2L31.4 38.8H19a3 3 0 0 1-3-3V15.8a3 3 0 0 1 3-3Z" fill="#474747"/><path d="M30.5 20.6H45a2.4 2.4 0 0 1 2.4 2.4V41.6a2.4 2.4 0 0 1-2.4 2.4H35" fill="none" stroke="#474747" stroke-width="3.3"/><path d="M26.9 24.4A4.7 4.7 0 1 0 28.3 28H23.9" fill="none" stroke="#fff" stroke-width="2.4"/><path d="M34.8 26.4H43.4M36.8 24V26.4M42 26.4C40.5 31 38 35 34.2 38.2M35.4 30.8L42.4 38.6" fill="none" stroke="#474747" stroke-width="1.7"/><path d="M104 13V35.5M95.4 27.2L104 35.8L112.6 27.2" fill="none" stroke="#474747" stroke-width="3.5" stroke-linejoin="miter"/><path d="M90 35.3V40.4a2.5 2.5 0 0 0 2.5 2.5H115.8a2.5 2.5 0 0 0 2.5-2.5V35.3" fill="none" stroke="#474747" stroke-width="3.5"/><path d="M173.70 16.00 L177.81 24.34 L187.01 25.67 L180.36 32.16 L181.93 41.33 L173.70 37.00 L165.47 41.33 L167.04 32.16 L160.39 25.67 L169.59 24.34Z" fill="none" stroke="#474747" stroke-width="3.2" stroke-linejoin="miter"/><path d="M180.6 14.4L183.2 21" fill="none" stroke="#474747" stroke-width="3.2" stroke-linecap="round"/><path d="M192.6 28.4C189 30 186 32.5 185.8 35C185.6 37.5 186.8 39.5 187.8 41.4" fill="none" stroke="#474747" stroke-width="3.2" stroke-linecap="round"/></svg>
<div class="b " style="left:2708px;top:178px;width:3px;height:32px;background:#d3d3d3;border-radius:2px;"></div>
<div class="b " style="left:2744px;top:174px;width:40px;height:40px;background:#b5411e;border-radius:50%;"></div>
<div class="t " style="left:2744.0px;width:40px;text-align:center;top:183.38px;font-size:22px;color:#fff;">S</div>
<div class="b " style="left:2833px;top:180px;width:6px;height:6px;background:#474747;border-radius:50%;"></div>
<div class="b " style="left:2833px;top:191px;width:6px;height:6px;background:#474747;border-radius:50%;"></div>
<div class="b " style="left:2833px;top:202px;width:6px;height:6px;background:#474747;border-radius:50%;"></div>
</div>
<script>(function(){var s=window.innerWidth/2880;if(s>0&&Math.abs(s-1)>0.01){document.getElementById("root").style.zoom=s;document.body.style.width=window.innerWidth+"px";document.body.style.height=(1864*s)+"px";document.documentElement.style.width=window.innerWidth+"px";document.documentElement.style.height=(1864*s)+"px";}})();</script>
</body></html>
